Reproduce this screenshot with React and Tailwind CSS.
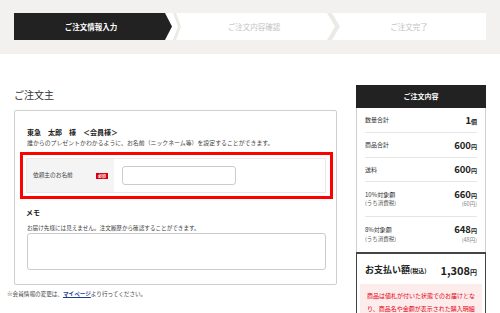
import React from "react";

const jp = { fontFamily: '"Noto Sans CJK JP", "Noto Sans", sans-serif' };

function Chevron({ w, pts }) {
  return (
    <svg width={w} height="27" viewBox={`0 0 ${w} 27`} className="shrink-0 block">
      <polygon points={pts} fill="#ebeae7" />
    </svg>
  );
}

function Row({ label, value, unit, h = "h-[24px]", last }) {
  return (
    <div className={`flex items-center justify-between ${h} ${last ? "" : "border-b border-[#e6e6e6]"}`}>
      <span className="text-[6px] leading-[8px] text-[#333]">{label}</span>
      <span className="flex items-baseline font-bold text-[#222]">
        <span className="text-[9.5px] leading-[10px]">{value}</span>
        <span className="text-[6px] leading-[8px]">{unit}</span>
      </span>
    </div>
  );
}

function TaxRow({ label, value, tax, h, last }) {
  return (
    <div className={`flex items-center justify-between ${h} ${last ? "" : "border-b border-[#e6e6e6]"}`}>
      <div className="flex flex-col">
        <span className="text-[6px] leading-[8.5px] text-[#333]">{label}</span>
        <span className="text-[5.5px] leading-[8.5px] text-[#555]">(うち消費税)</span>
      </div>
      <div className="flex flex-col items-end">
        <span className="flex items-baseline font-bold text-[#222] leading-[8.5px]">
          <span className="text-[9.5px]">{value}</span>
          <span className="text-[6px]">円</span>
        </span>
        <span className="text-[5.5px] leading-[8.5px] text-[#888]">{tax}</span>
      </div>
    </div>
  );
}

export default function App() {
  return (
    <div className="w-[500px] h-[313px] overflow-hidden bg-white text-[#333]" style={jp}>
      {/* Steps */}
      <div className="bg-[#f2f1ef] pt-[13px] pb-[14px] px-[14px]">
        <div className="flex h-[27px] w-[472px] bg-white">
          <div className="w-[158px] h-[27px] bg-[#222] flex items-center justify-center text-white font-bold text-[7.5px] [clip-path:polygon(0_0,151px_0,158px_50%,151px_100%,0_100%)] pr-[4px]">
            ご注文情報入力
          </div>
          <Chevron w={9} pts="1,0 4,0 9,13.5 4,27 1,27 6,13.5" />
          <div className="w-[146px] flex items-center justify-center text-[7.5px] text-[#c4c4c4]">
            ご注文内容確認
          </div>
          <Chevron w={13} pts="0,0 5,0 13,13.5 5,27 0,27 8,13.5" />
          <div className="flex-1 flex items-center justify-center text-[7.5px] text-[#c4c4c4] pr-[8px]">
            ご注文完了
          </div>
        </div>
      </div>

      {/* Main */}
      <div className="flex px-[14px] pt-[31px] gap-[19px]">
        {/* Left */}
        <div className="w-[323px] shrink-0">
          <h2 className="text-[10px] leading-[20px] text-[#333] font-normal">ご注文主</h2>
          <div className="mt-[5px] border border-[#cfcfcf] rounded-[2px] pb-[14px]">
            <div className="pl-[12px] pt-[16px]">
              <p className="text-[7px] leading-[10px] font-bold text-[#222]">東急　太郎　様　＜会員様＞</p>
              <p className="mt-[1px] text-[5.9px] leading-[10px] text-[#444]">
                誰からのプレゼントかわかるように、お名前（ニックネーム等）を設定することができます。
              </p>
            </div>
            <div className="ml-[5px] mr-[3px] mt-[4px] border-[3px] border-[#ff0000] pt-[3px] pb-[3px] pl-[3px] pr-[4px]">
              <div className="flex h-[35px] border border-[#e8e8e8]">
                <div className="w-[87px] bg-[#f4f4f4] flex items-center justify-between pl-[6px] pr-[6px]">
                  <span className="text-[5.7px] text-[#444]">依頼主のお名前</span>
                  <span className="bg-[#d7000f] text-white text-[4px] leading-[6px] px-[2px] font-bold">必須</span>
                </div>
                <div className="flex items-center pl-[8px]">
                  <div className="w-[114px] h-[19px] border border-[#cccccc] rounded-[3px] bg-white"></div>
                </div>
              </div>
            </div>
            <div className="pl-[11px] mt-[8px]">
              <p className="text-[7px] leading-[10px] font-bold text-[#222]">メモ</p>
              <p className="mt-[6px] pl-[1px] text-[5.6px] leading-[10px] text-[#444]">
                お届け先様には見えません。注文履歴から確認することができます。
              </p>
            </div>
            <div className="ml-[12px] w-[299px] h-[37px] border border-[#cccccc] rounded-[3px]"></div>
          </div>
          <p className="mt-[4px] -ml-[7px] text-[5.6px] leading-[10px] text-[#444]">
            ※会員情報の変更は、
            <span className="text-[#1a3c8f] font-bold underline">マイページ</span>
            より行ってください。
          </p>
        </div>

        {/* Right */}
        <div className="w-[130px] shrink-0">
          <div className="h-[23px] bg-[#222] flex items-center justify-center text-white font-bold text-[7px]">
            ご注文内容
          </div>
          <div className="border-x border-[#cfcfcf] px-[8px]">
            <Row label="数量合計" value="1" unit="個" h="h-[25px]" />
            <Row label="商品合計" value="600" unit="円" h="h-[25px]" />
            <Row label="送料" value="600" unit="円" />
            <TaxRow label="10%対象額" value="660" tax="(60円)" h="h-[35px]" />
            <TaxRow label="8%対象額" value="648" tax="(48円)" h="h-[35px]" last />
          </div>
          <div className="border-x border-t-2 border-[#444] h-[80px]">
            <div className="flex items-center justify-between h-[30px] pt-[2px] px-[8px]">
              <span className="flex items-baseline font-bold text-[#222]">
                <span className="text-[9px]">お支払い額</span>
                <span className="text-[6px]">(税込)</span>
              </span>
              <span className="flex items-baseline font-bold text-[#222]">
                <span className="text-[11px]">1,308</span>
                <span className="text-[7px]">円</span>
              </span>
            </div>
            <div className="mx-[3px] bg-[#fdecec] pt-[5px] pb-[6px] text-center text-[#e60012] text-[6px] leading-[13px]">
              商品は値札が付いた状態でのお届けとな<br />り、商品名や金額が表示された購入明細
            </div>
          </div>
        </div>
      </div>
    </div>
  );
}
